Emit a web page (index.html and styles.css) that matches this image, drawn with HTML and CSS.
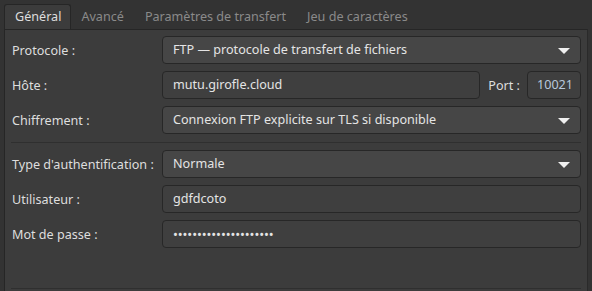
FILE: index.html
```html
<!DOCTYPE html>
<html>
<head>
    <title>Paramètres du site</title>
    <link rel="stylesheet" href="styles.css">
</head>
<body>
    <div class="tabs">
        <div class="tab active">Général</div>
        <div class="tab">Avancé</div>
        <div class="tab">Paramètres de transfert</div>
        <div class="tab">Jeu de caractères</div>
    </div>
    <div class="panel">
        <div class="form">
            <label>Protocole :</label>
            <div class="combo">FTP — protocole de transfert de fichiers<span class="arrow"></span></div>

            <label>Hôte :</label>
            <div class="host-row">
                <div class="entry grow">mutu.girofle.cloud</div>
                <label class="port-label">Port :</label>
                <div class="entry port">10021</div>
            </div>

            <label>Chiffrement :</label>
            <div class="combo">Connexion FTP explicite sur TLS si disponible<span class="arrow"></span></div>
        </div>
        <hr class="sep">
        <div class="form">
            <label>Type d'authentification :</label>
            <div class="combo">Normale<span class="arrow"></span></div>

            <label>Utilisateur :</label>
            <div class="entry">gdfdcoto</div>

            <label>Mot de passe :</label>
            <div class="entry password">•••••••••••••••••••••</div>
        </div>
        <hr class="sep bottom">
    </div>
</body>
</html>
```

FILE: styles.css
```css
html {
    overflow: hidden;
}

body {
    margin: 0;
    padding: 4px 4px 0 4px;
    background-color: #333333;
    font-family: 'Noto Sans', sans-serif;
    font-size: 12.6px;
    color: #dedede;
    height: 291px;
    box-sizing: border-box;
    overflow: hidden;
}

.tabs {
    display: flex;
    height: 25px;
}

.tab {
    padding: 0 11px 0 10px;
    line-height: 25px;
    color: #8a8a8a;
}

.tab.active {
    background-color: #3c3c3c;
    color: #dedede;
    border: 1px solid #262626;
    border-bottom: none;
    border-radius: 3px 3px 0 0;
    line-height: 24px;
    padding: 0 9px 0 10px;
    position: relative;
    z-index: 1;
    height: 25px;
    box-sizing: border-box;
    margin-bottom: -1px;
}

.panel {
    background-color: #3c3c3c;
    border: 1px solid #262626;
    border-right-color: #2a2a2a;
    border-bottom: none;
    height: 262px;
    box-sizing: border-box;
    padding: 6px 6px 0 6px;
}

.form {
    display: grid;
    grid-template-columns: 151px 1fr;
    row-gap: 7px;
    align-items: center;
}

label {
    padding-left: 1px;
}

.combo, .entry {
    height: 28px;
    box-sizing: border-box;
    border: 1px solid #272727;
    border-radius: 4px;
    line-height: 26px;
    padding: 0 10px;
    white-space: nowrap;
    overflow: hidden;
    color: #e4e4e4;
}

.combo {
    background-color: #464646;
    position: relative;
}

.entry {
    background-color: #3f3f3f;
}

.arrow {
    position: absolute;
    right: 10px;
    top: 11px;
    width: 0;
    height: 0;
    border-left: 6px solid transparent;
    border-right: 6px solid transparent;
    border-top: 6px solid #f0f0f0;
}

.host-row {
    display: flex;
    align-items: center;
}

.grow {
    flex: 1;
}

.port-label {
    padding: 0 7px 0 8px;
}

.port {
    width: 54px;
    padding: 0 0 0 9px;
    color: #b8c8dc;
}

.password {
    font-size: 13px;
    letter-spacing: -0.1px;
}

.sep {
    border: none;
    border-top: 1px solid #2f2f2f;
    height: 0;
    margin: 8px 0 7px 0;
}

.sep.bottom {
    margin-top: 40px;
}
```
